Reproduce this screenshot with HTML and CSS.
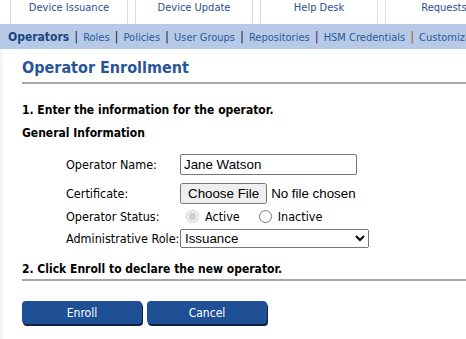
FILE: index.html
```html
<!DOCTYPE html>
<html lang="en">
<head>
    <meta charset="UTF-8">
    <meta name="viewport" content="width=device-width, initial-scale=1.0">
    <title>Operator Enrollment</title>

    <link rel="stylesheet" href="styles.css">
</head>
<body>

    <div class="tabs">
        <div class="tab">Device Issuance</div>
        <div class="tab">Device Update</div>
        <div class="tab">Help Desk</div>
        <div class="tab">Requests</div>
    </div>

    <div class="subnav">
        <a class="current">Operators</a><span class="sep">|</span><a>Roles</a><span class="sep">|</span><a>Policies</a><span class="sep">|</span><a>User Groups</a><span class="sep">|</span><a>Repositories</a><span class="sep purple">|</span><a>HSM Credentials</a><span class="sep brown">|</span><a>Customization</a>
    </div>

    <div class="main">
        <h1>Operator Enrollment</h1>

        <form id="enrollForm">
            <h2>1. Enter the information for the operator.</h2>
            <h3>General Information</h3>

            <div class="row name">
                <label for="opName">Operator Name:</label>
                <input type="text" id="opName" name="opName" value="Jane Watson">
            </div>
            <div class="row cert">
                <label for="cert">Certificate:</label>
                <input type="file" id="cert" name="cert">
            </div>
            <div class="row status">
                <label>Operator Status:</label>
                <span class="radios">
                    <input type="radio" id="active" name="status" checked disabled>
                    <label for="active" class="opt">Active</label>
                    <input type="radio" id="inactive" name="status">
                    <label for="inactive" class="opt">Inactive</label>
                </span>
            </div>
            <div class="row role">
                <label for="role">Administrative Role:</label>
                <select id="role" name="role">
                    <option>Issuance</option>
                    <option>Update</option>
                    <option>Help Desk</option>
                </select>
            </div>

            <h2 class="step2">2. Click Enroll to declare the new operator.</h2>

            <div class="buttons">
                <button type="submit" class="btn">Enroll</button>
                <button type="button" class="btn">Cancel</button>
            </div>
        </form>
    </div>

</body>
</html>
```

FILE: styles.css
```css
body {
    margin: 0;
    font-family: "DejaVu Sans Condensed", "DejaVu Sans", Verdana, sans-serif;
    font-stretch: condensed;
    font-size: 12px;
    color: #000;
    overflow: hidden;
    background: #fff;
}

.tabs {
    display: flex;
    gap: 7px;
    padding-left: 10px;
    height: 24px;
    white-space: nowrap;
}

.tab {
    flex: 0 0 118px;
    box-sizing: border-box;
    border-left: 1px solid #dcdcdc;
    border-right: 1px solid #dcdcdc;
    text-align: center;
    font-size: 11px;
    line-height: 15px;
    color: #2b4f8f;
}

.subnav {
    height: 25px;
    line-height: 25px;
    background: #b6c9e7;
    padding-left: 8px;
    white-space: nowrap;
    font-size: 11px;
    color: #2d5a9c;
}

.subnav a {
    color: #2d5a9c;
}

.subnav a.current {
    font-weight: bold;
    font-size: 12px;
    color: #1d4683;
}

.sep {
    margin: 0 5px;
    color: #1a2a50;
    font-size: 13px;
}

.sep.purple {
    color: #5a1f66;
}

.sep.brown {
    color: #9a5a14;
}

.main {
    border-left: 3px solid #f4f4f4;
    padding: 9px 0 0 19px;
    height: 300px;
}

h1 {
    margin: 0;
    font-size: 16px;
    color: #2a5597;
    padding-bottom: 5px;
    border-bottom: 2px solid #a8a8a8;
}

h2 {
    margin: 19px 0 0;
    font-size: 12px;
}

h3 {
    margin: 9px 0 12px;
    font-size: 12px;
}

.row {
    display: flex;
    align-items: center;
    height: 24px;
    margin-left: 44px;
}

.row > label {
    width: 114px;
    flex: none;
    font-size: 12.5px;
}

.row.name {
    margin-bottom: 5px;
}

.row.status {
    height: 22px;
    margin-bottom: 1px;
}

.row.role {
    height: 20px;
}

input[type="text"] {
    width: 177px;
    height: 21px;
    box-sizing: border-box;
    font-family: "Liberation Sans", Arial, sans-serif;
    font-size: 13.33px;
    padding: 1px 3px;
    border: 1px solid #767676;
    border-radius: 2px;
}

input[type="file"] {
    font-family: "Liberation Sans", Arial, sans-serif;
    font-size: 13.33px;
}

.radios {
    display: flex;
    align-items: center;
}

.radios input {
    margin: 0 6px 0 6px;
}

.opt {
    margin-right: 13px;
    font-size: 12.5px;
}

select {
    width: 189px;
    height: 19px;
    font-family: "Liberation Sans", Arial, sans-serif;
    font-size: 13.33px;
}

.step2 {
    margin-top: 14px;
    padding-bottom: 3px;
    border-bottom: 2px solid #a8a8a8;
}

.buttons {
    display: flex;
    gap: 5px;
    margin-top: 20px;
}

.btn {
    width: 120px;
    height: 23px;
    background: #1f5096;
    color: #fff;
    border: none;
    border-radius: 4px;
    box-shadow: 1px 2px 0 #0d2440;
    font-family: "DejaVu Sans Condensed", "DejaVu Sans", Verdana, sans-serif;
    font-stretch: condensed;
    font-size: 12px;
}
```
